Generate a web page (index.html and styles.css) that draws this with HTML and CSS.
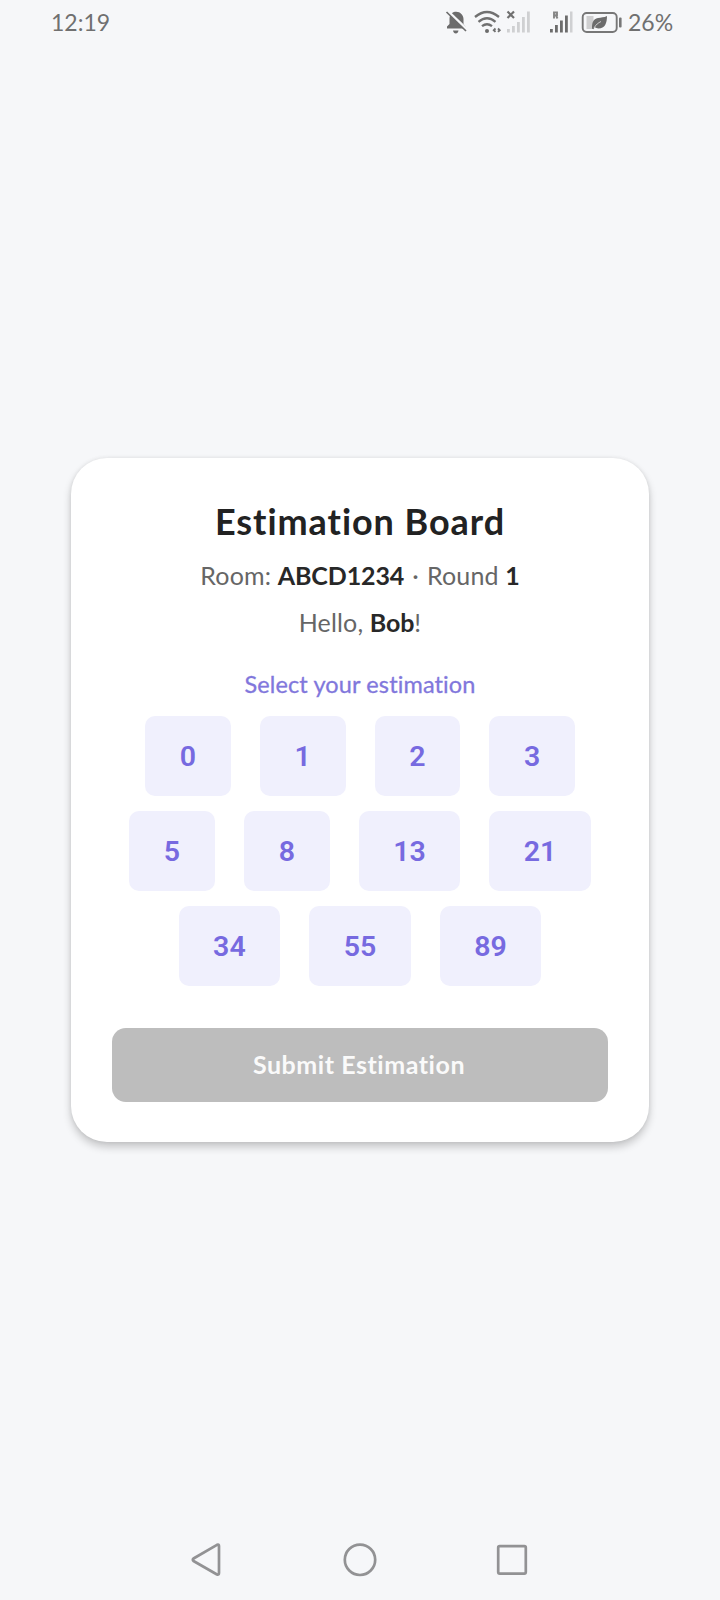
FILE: index.html
```html
<!DOCTYPE html>
<html lang="en">
<head>
<meta charset="utf-8">
<title>Estimation Board</title>
<link rel="stylesheet" href="styles.css">
</head>
<body>
<div class="screen">
  <header class="status">
    <span class="clock">12:19</span>
    <div class="indicators">
      <svg class="status-icons" width="184" height="46" viewBox="440 0 184 46">
        <g fill="#6c6c6c">
          <path d="M447 28.500v-2l2.500-2.500v-5c0-4 2.500-6.500 5.500-7.200 4.500-.8 8.500 2.800 8.500 7.200v5l2 2.500v2z"/>
          <path d="M453 30.500h5.500q-.5 3-2.700 3t-2.800-3z"/>
        </g>
        <path d="M447.500 11l20 19" stroke="#f6f7f9" stroke-width="3"/>
        <path d="M446.500 12l19.500 19" stroke="#6c6c6c" stroke-width="1.700"/>
        <g fill="none" stroke="#707070" stroke-width="2.300">
          <path d="M475 17q12-10 24 0"/>
          <path d="M478.500 21.800q8.500-7 17 0"/>
          <path d="M482 26.200q5-4 10 0"/>
          <path d="M495.500 28.500l-1.700 1.700 1.700 1.700M498 28.500l1.700 1.700-1.700 1.700" stroke-width="1.900"/>
        </g>
        <circle cx="487" cy="31" r="2" fill="#6c6c6c"/>
        <path d="M507.500 11.500l6.500 6.500M514 11.500l-6.500 6.500" stroke="#707070" stroke-width="2.200"/>
        <g fill="#cfd0d2">
          <rect x="507" y="29" width="2.800" height="3.500"/><rect x="512" y="26" width="2.800" height="6.500"/>
          <rect x="517" y="22" width="2.800" height="10.500"/><rect x="522" y="17" width="2.800" height="15.500"/>
          <rect x="527" y="11.500" width="2.800" height="21"/><rect x="570" y="11.500" width="2.500" height="21"/>
        </g>
        <g fill="#6c6c6c">
          <rect x="550" y="29" width="2.800" height="3.500"/><rect x="555" y="25" width="2.800" height="7.500"/>
          <rect x="560" y="20.500" width="2.800" height="12"/><rect x="565" y="15.500" width="2.800" height="17"/>
        </g>
        <path d="M554 18.500v-6h3v2.700h-3M556 15.500l1.500 3" fill="none" stroke="#858585" stroke-width="1.900"/>
        <rect x="582.700" y="13" width="34" height="19" rx="4" fill="none" stroke="#777" stroke-width="1.900"/>
        <rect x="586.500" y="16" width="7" height="13" fill="#cfcfd0"/>
        <path d="M592 28.500c0-6 1-9.500 6-10.500 3-.6 6-.4 9-2 0 7-2 12.500-8.500 12.500-1.700 0-2.500-.5-3.500-1.200l-1.800 2z" fill="#6c6c6c"/>
        <path d="M594 28c2-3.500 4-5 7-6.500" fill="none" stroke="#e4e4e6" stroke-width=".8"/>
        <rect x="619" y="17.500" width="2.600" height="10" rx="1" fill="#777"/>
      </svg>
      <span class="percent">26%</span>
    </div>
  </header>

  <main class="stage">
    <section class="card">
      <h1 class="title">Estimation Board</h1>
      <p class="room">Room: <b>ABCD1234</b> <span class="dot">·</span> Round <b>1</b></p>
      <p class="hello">Hello, <b>Bob</b>!</p>
      <p class="prompt">Select your estimation</p>
      <div class="options">
        <div class="row"><button class="chip">0</button><button class="chip">1</button><button class="chip">2</button><button class="chip">3</button></div>
        <div class="row"><button class="chip">5</button><button class="chip">8</button><button class="chip wide">13</button><button class="chip wide">21</button></div>
        <div class="row"><button class="chip wide">34</button><button class="chip wide">55</button><button class="chip wide">89</button></div>
      </div>
      <button class="submit">Submit Estimation</button>
    </section>
  </main>

  <nav class="navbar">
    <svg width="340" height="40" viewBox="190 1540 340 40" fill="none" stroke="#929294" stroke-width="2.700" stroke-linejoin="round">
      <path d="M193.500 1558.500q-1.400 1.300 0 2.500l23.500 13.500q2 .6 2-1.500v-27q0-2-2-1.200z"/>
      <circle cx="360" cy="1559.800" r="15.200"/>
      <rect x="498.200" y="1546.200" width="27.600" height="27.400" rx="1.500"/>
    </svg>
  </nav>
</div>
</body>
</html>
```
FILE: styles.css
```css
* { box-sizing: border-box; }
body { margin: 0; background: #f6f7f9; font-family: Lato, sans-serif; font-variant-ligatures: none; }
.screen { width: 720px; height: 1600px; display: flex; flex-direction: column; }
.status { height: 46px; padding: 0 47px 0 51px; display: flex; justify-content: space-between; color: #707070; font-size: 23px; line-height: 45px; }
.clock { letter-spacing: 0; }
.indicators { display: flex; gap: 4px; }
.status-icons { display: block; }
.percent { width: 45px; white-space: nowrap; }
.stage { flex: 1; padding: 412px 71px 0; }
.card { height: 684px; padding: 39px 41px 40px; border-radius: 36px; background: #fff; display: flex; flex-direction: column; text-align: center; box-shadow: 0 5px 9px rgba(0, 0, 0, 0.2), 0 0 4px rgba(0, 0, 0, 0.08); }
.title, .room, .hello, .prompt { margin: 0; white-space: nowrap; }
.title { height: 49px; font-size: 36px; line-height: 49px; font-weight: 700; letter-spacing: 0.95px; color: #222; }
.room, .hello { color: #666; font-size: 25px; line-height: 36px; letter-spacing: 0.15px; }
.room { margin-top: 11px; }
.hello { margin-top: 11px; }
.room b, .hello b { color: #282828; letter-spacing: -0.1px; }
.dot { margin: 0 1.500px; }
.prompt { margin-top: 28px; color: #8177dc; font-size: 23.500px; line-height: 32px; letter-spacing: 0.12px; -webkit-text-stroke: 0.3px #8177dc; }
.options { margin-top: 16px; display: flex; flex-direction: column; gap: 15px; }
.row { display: flex; justify-content: center; gap: 29px; }
.chip { width: 85.800px; height: 80px; padding: 0; border: 0; border-radius: 10px; background: #f0f0fd; color: #776ae0; font: 600 28.500px Roboto, sans-serif; }
.wide { width: 101.600px; }
.submit { margin-top: 42px; height: 74px; padding: 0 2px 2px 0; border: 0; border-radius: 14px; background: #bdbdbd; color: #fafafa; font: 700 25px Lato, sans-serif; letter-spacing: 0.55px; font-variant-ligatures: none; }
.navbar { height: 60px; display: flex; justify-content: center; }
```
